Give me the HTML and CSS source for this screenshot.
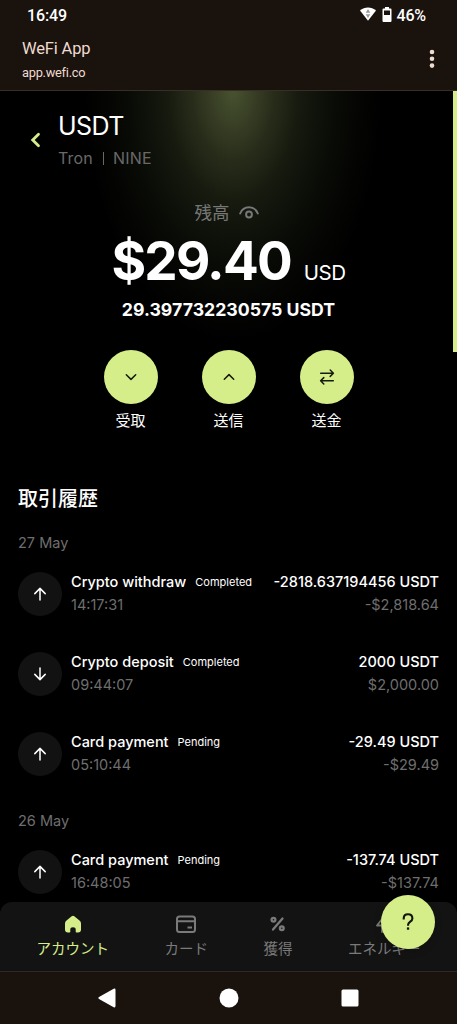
FILE: index.html
```html
<!DOCTYPE html>
<html lang="ja">
<head>
<meta charset="utf-8">
<title>WeFi App</title>
<link rel="stylesheet" href="styles.css">
</head>
<body>
<div class="screen">
  <header class="chrome">
    <div class="status">
      <span class="clock">16:49</span>
      <div class="status-icons">
        <svg class="wifi" width="16" height="14" viewBox="0 0 16 14"><path d="M0 3.600C4.500-.7 11.500-.7 16 3.600L8 13.800Z" fill="#fff"/><path d="M8 2 10.300 5.800H5.700ZM8 11 5.700 7.200H10.300Z" fill="#999"/></svg>
        <svg class="battery" width="10" height="15" viewBox="0 0 10 15"><path d="M3 0h4v1.500h1.500q1 0 1 1V14q0 1-1 1h-7q-1 0-1-1V2.500q0-1 1-1H3Z" fill="#fff"/><path d="M2 3.500h6v4.500H2Z" fill="#1a120d"/></svg>
        <span class="level">46%</span>
      </div>
    </div>
    <div class="titlebar">
      <div>
        <div class="app-name">WeFi App</div>
        <div class="app-url">app.wefi.co</div>
      </div>
      <svg class="dots" width="6" height="20" viewBox="0 0 6 20" fill="#eedbd0"><circle cx="3" cy="3" r="2.300"/><circle cx="3" cy="9.800" r="2.300"/><circle cx="3" cy="16.600" r="2.300"/></svg>
    </div>
  </header>

  <main class="content">
    <div class="scroll-indicator"></div>
    <div class="asset">
      <svg class="back" width="12" height="16" viewBox="0 0 12 16"><path d="M9.500 2.200 3.700 8 9.500 13.800" fill="none" stroke="#d5ee89" stroke-width="2.800" stroke-linecap="round"/></svg>
      <div>
        <h1 class="asset-name">USDT</h1>
        <div class="asset-network"><span class="network">Tron</span><span class="divider"></span><span>NINE</span></div>
      </div>
    </div>

    <section class="balance">
      <div class="balance-label"><span>残高</span>
        <svg width="20" height="14" viewBox="0 0 20 14" fill="none" stroke="#777" stroke-width="2" stroke-linecap="round"><path d="M1.200 7.500C4.500-.7 15.500-.7 18.800 7.500"/><circle cx="10" cy="8.500" r="2.900"/></svg>
      </div>
      <div class="amount"><span class="amount-value">$29.40</span><span class="amount-currency">USD</span></div>
      <div class="amount-asset">29.397732230575 USDT</div>
    </section>

    <div class="actions">
      <div class="action"><div class="action-button"><svg width="24" height="24" viewBox="0 0 24 24"><path d="m7.300 9.800 4.700 4.600 4.700-4.600"/></svg></div><span>受取</span></div>
      <div class="action"><div class="action-button"><svg width="24" height="24" viewBox="0 0 24 24"><path d="m7.300 14.200 4.700-4.600 4.700 4.600"/></svg></div><span>送信</span></div>
      <div class="action"><div class="action-button"><svg width="24" height="24" viewBox="0 0 24 24"><path d="M5.700 8.200h12.700M15.200 5l3.200 3.200-3.200 3.200M18.300 15.800H5.600M8.800 12.600l-3.200 3.200L8.800 19"/></svg></div><span>送金</span></div>
    </div>

    <section class="history">
      <h2>取引履歴</h2>
      <div class="date">27 May</div>
      <div class="rows">
        <div class="row">
          <div class="row-icon"><svg width="14" height="14" viewBox="0 0 14 14"><path d="M7 13V1.500M1.800 6.600 7 1.400l5.200 5.200"/></svg></div>
          <div class="row-main"><div class="row-title"><span>Crypto withdraw</span><small>Completed</small></div><div class="row-sub">14:17:31</div></div>
          <div class="row-value"><div class="row-title">-2818.637194456 USDT</div><div class="row-sub">-$2,818.64</div></div>
        </div>
        <div class="row">
          <div class="row-icon"><svg width="14" height="14" viewBox="0 0 14 14"><path d="M7 1v11.500M1.800 7.400 7 12.600l5.200-5.200"/></svg></div>
          <div class="row-main"><div class="row-title"><span>Crypto deposit</span><small>Completed</small></div><div class="row-sub">09:44:07</div></div>
          <div class="row-value"><div class="row-title">2000 USDT</div><div class="row-sub">$2,000.00</div></div>
        </div>
        <div class="row">
          <div class="row-icon"><svg width="14" height="14" viewBox="0 0 14 14"><path d="M7 13V1.500M1.800 6.600 7 1.400l5.200 5.200"/></svg></div>
          <div class="row-main"><div class="row-title"><span>Card payment</span><small>Pending</small></div><div class="row-sub">05:10:44</div></div>
          <div class="row-value"><div class="row-title">-29.49 USDT</div><div class="row-sub">-$29.49</div></div>
        </div>
      </div>
      <div class="date second">26 May</div>
      <div class="rows">
        <div class="row">
          <div class="row-icon"><svg width="14" height="14" viewBox="0 0 14 14"><path d="M7 13V1.500M1.800 6.600 7 1.400l5.200 5.200"/></svg></div>
          <div class="row-main"><div class="row-title"><span>Card payment</span><small>Pending</small></div><div class="row-sub">16:48:05</div></div>
          <div class="row-value"><div class="row-title">-137.74 USDT</div><div class="row-sub">-$137.74</div></div>
        </div>
      </div>
    </section>
  </main>

  <nav class="tabs">
    <div class="tab active"><svg width="24" height="20" viewBox="0 0 24 20"><path d="M10.700 2.200q1.300-1 2.600 0l5.200 4.300q1.500 1.200 1.500 3V15.500q0 3-3 3h-1.500q-.8 0-.8-.8v-2.200q0-2.200-2.700-2.200t-2.700 2.200v2.200q0 .8-.8.8H7q-3 0-3-3v-6q0-1.800 1.500-3Z" fill="#d5ee89"/></svg><span>アカウント</span></div>
    <div class="tab"><svg width="24" height="20" viewBox="0 0 24 20" fill="none" stroke="#7a7a7a" stroke-width="2"><rect x="3" y="2.500" width="18" height="15.500" rx="2.500"/><path d="M3 7.300h18M13.500 13.500h4.500"/></svg><span>カード</span></div>
    <div class="tab"><svg width="24" height="20" viewBox="0 0 24 20" fill="none" stroke="#7a7a7a" stroke-width="2.300" stroke-linecap="round"><circle cx="7.500" cy="5.800" r="1.900"/><circle cx="15.800" cy="14.200" r="1.900"/><path d="M16.500 4.500 7 15.600"/></svg><span>獲得</span></div>
    <div class="tab"><svg width="24" height="20" viewBox="0 0 24 20" fill="none" stroke="#7a7a7a" stroke-width="1.800" stroke-linejoin="round"><path d="M12 2.500 5 11.500h5V18l9-10h-7Z"/></svg><span>エネルギー</span></div>
    <div class="help"><svg width="16" height="20" viewBox="0 0 16 20"><path d="M3.700 6.400C3.700 3.700 5.400 2.300 8 2.300s4.400 1.500 4.400 4.100c0 3.200-4.300 3.300-4.300 6.400" fill="none" stroke="#12140b" stroke-width="2.100" stroke-linecap="square"/><rect x="6.900" y="15.400" width="2.300" height="2.300" fill="#12140b"/></svg></div>
  </nav>

  <footer class="system">
    <svg width="18" height="20" viewBox="0 0 18 20"><path d="M1 9.100 15.700.7Q17.500 0 17.500 2v16q0 2-1.800 1.300L1 10.900Q-.3 10 1 9.100Z" fill="#fff"/></svg>
    <svg width="20" height="20" viewBox="0 0 20 20"><circle cx="10" cy="10" r="9.500" fill="#fff"/></svg>
    <svg width="18" height="18" viewBox="0 0 18 18"><rect x=".5" y=".5" width="17" height="17" rx="1.500" fill="#fff"/></svg>
  </footer>
</div>
</body>
</html>
```
FILE: styles.css
```css
* { box-sizing: border-box; }
body { margin: 0; background: #000; }
svg { display: block; flex: none; }
.screen {
  width: 457px; height: 1024px; overflow: hidden;
  display: flex; flex-direction: column;
  background: #000; color: #fff; white-space: nowrap;
  font-family: Inter, "Noto Sans CJK JP", sans-serif;
}
.chrome { flex: none; height: 91px; background: #1a120d; border-bottom: 1px solid #3a2d28; font-family: Roboto, sans-serif; }
.status { display: flex; justify-content: space-between; align-items: center; height: 30px; padding: 0 31px 0 27px; font-size: 16px; font-weight: 500; letter-spacing: -.15px; }
.status-icons { display: flex; align-items: center; }
.battery { margin: 0 4px 2px 6px; }
.wifi { margin-bottom: 3px; }
.titlebar { display: flex; justify-content: space-between; padding: 9px 22px 0; color: #eedbd0; }
.app-name { font-size: 16.500px; line-height: 20px; letter-spacing: -.15px; }
.app-url { margin-top: 6px; font-size: 12.800px; line-height: 16px; letter-spacing: -.25px; }
.dots { margin: 10px 0 0; }

.content {
  position: relative; flex: none; height: 811px; overflow: hidden;
  background: radial-gradient(ellipse 148px 250px at 233px 0, #48522f 0, #383f25 14%, #272c1a 28%, #15190e 46%, #090b06 70%, #000 100%) #000;
}
.scroll-indicator { position: absolute; right: 0; top: 0; width: 4.500px; height: 261px; background: #d5ee89; }
.asset { display: flex; padding: 19px 0 0 29px; }
.back { margin: 22px 17px 0 0; }
.asset-name { margin: 0; font-size: 25px; line-height: 32px; font-weight: 400; letter-spacing: -.6px; }
.asset-network { display: flex; align-items: center; margin-top: 5px; color: #696969; font-size: 16px; line-height: 22px; letter-spacing: .2px; }
.divider { width: 1px; height: 13px; margin: 0 9px 0 10px; background: #696969; }

.balance { display: flex; flex-direction: column; align-items: center; }
.balance-label { display: flex; align-items: center; gap: 9px; margin-top: 30px; padding-right: 4px; font-size: 17.500px; line-height: 28px; color: #777; }
.amount { display: flex; align-items: baseline; gap: 13px; height: 60px; line-height: 60px; margin-top: 4px; }
.amount-value { font-size: 53px; font-weight: 700; letter-spacing: -1.800px; }
.amount-currency { font-size: 20.500px; letter-spacing: -.5px; }
.amount-asset { margin-top: 8px; font-size: 17.700px; line-height: 22px; font-weight: 700; }

.actions { display: flex; justify-content: center; gap: 44px; margin-top: 29px; }
.action { display: flex; flex-direction: column; align-items: center; width: 54px; font-size: 15px; line-height: 22px; font-weight: 400; }
.action-button { display: flex; align-items: center; justify-content: center; width: 54px; height: 54px; margin-bottom: 6px; border-radius: 50%; background: #d5ee89; }
.action-button svg { fill: none; stroke: #161a0c; stroke-width: 1.500; stroke-linecap: round; stroke-linejoin: round; }

.history { padding: 52px 18px 0; }
.history h2 { margin: 0; font-size: 20px; line-height: 30px; font-weight: 500; }
.date { margin-top: 18px; color: #6e6e6e; font-size: 14.500px; line-height: 22px; }
.date.second { margin-top: 34px; }
.rows { display: flex; flex-direction: column; gap: 36px; margin-top: 18px; }
.row { display: flex; height: 44px; }
.row-icon { display: flex; align-items: center; justify-content: center; width: 44px; height: 44px; margin-right: 9px; border-radius: 50%; background: #121212; }
.row-icon svg { fill: none; stroke: #fff; stroke-width: 1.500; stroke-linecap: round; stroke-linejoin: round; }
.row-value { margin-left: auto; text-align: right; }
.row-title { display: flex; align-items: center; font-size: 14.500px; line-height: 20px; font-weight: 500; }
.row-value .row-title { justify-content: flex-end; }
.row-title small { margin-left: 9px; font-size: 11px; font-weight: 400; }
.row-sub { margin-top: 3px; color: #6e6e6e; font-size: 14.500px; line-height: 20px; }

.tabs { position: relative; flex: none; display: flex; gap: 55.500px; height: 70px; padding: 12px 0 0 36.500px; border-radius: 12px 12px 0 0; background: #131313; border-bottom: 1px solid #2d2926; }
.tab { display: flex; flex-direction: column; align-items: center; flex: none; color: #7a7a7a; font-size: 14.500px; line-height: 22px; }
.tab span { margin-top: 4px; }
.tab.active { color: #d5ee89; }
.help { position: absolute; left: 381px; top: -7px; width: 54px; height: 54px; display: flex; align-items: center; justify-content: center; border-radius: 50%; background: #d5ee89; box-shadow: 0 2px 8px #0003; }
.system { flex: 1; display: flex; align-items: center; justify-content: space-between; padding: 0 98px; background: #1a120d; }
```
